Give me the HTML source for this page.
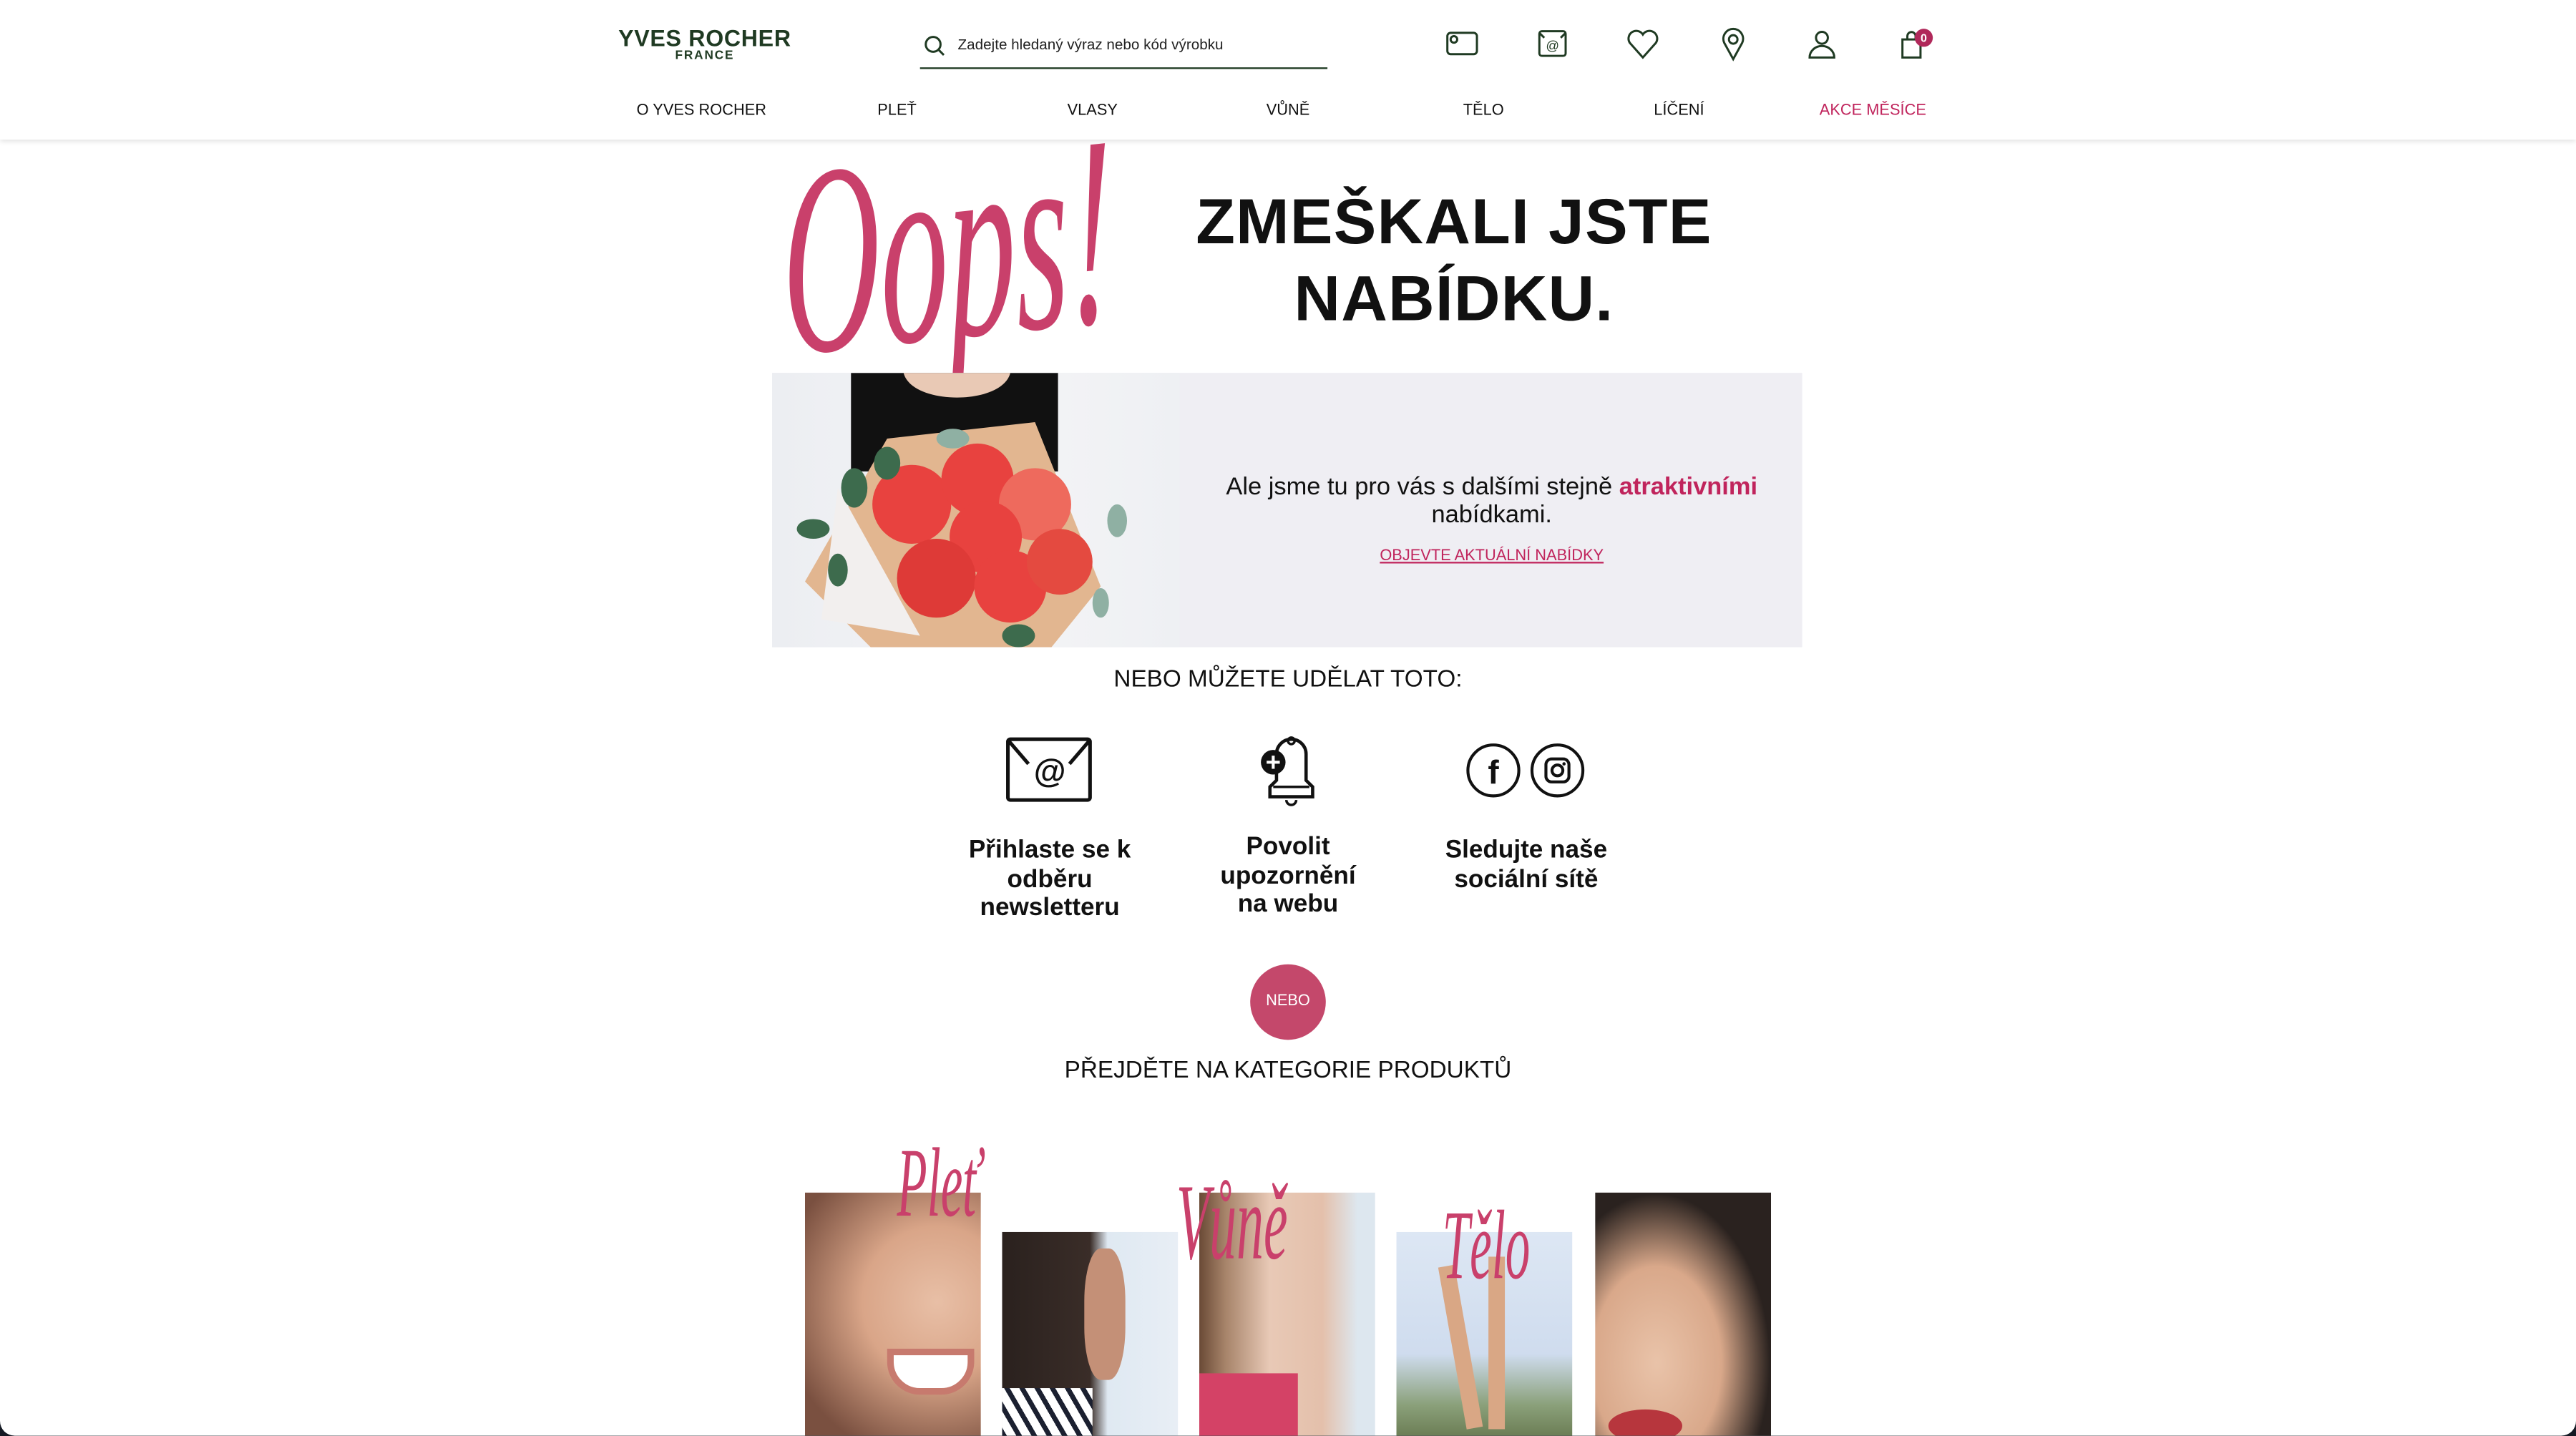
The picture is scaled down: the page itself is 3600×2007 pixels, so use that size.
<!DOCTYPE html>
<html><head><meta charset="utf-8">
<style>
html,body{margin:0;padding:0;background:#151a24;width:3600px;height:2006px;overflow:hidden}
#w{position:absolute;left:0;top:0;width:1568px;height:874px;transform:scale(2.29592);transform-origin:0 0;background:#fff;border-radius:0 0 9px 9px;overflow:hidden;font-family:"Liberation Sans",sans-serif;color:#111}
.a{position:absolute}
.c{position:absolute;transform:translateX(-50%);white-space:nowrap;text-align:center}
.nav{font-size:9.5px;top:62px;color:#111}
.g{stroke:#1f3a22;fill:none;stroke-width:1.3}
.lbl{font-weight:bold;font-size:15.3px;line-height:17.5px}
.ph{position:absolute;overflow:hidden}
.sc{position:absolute;color:#c9406b;font-family:"Liberation Serif",serif;font-style:italic;transform:scaleX(.5);transform-origin:0 0;white-space:nowrap}
</style></head><body><div id="w">
<div class="a" style="left:0;top:0;width:1568px;height:85px;background:#fff;box-shadow:0 1px 3px rgba(0,0,0,.12)"></div>
<div class="c" style="left:429px;top:15px;font-weight:bold;font-size:14px;color:#1f3a22;letter-spacing:.3px">YVES ROCHER</div>
<div class="c" style="left:429px;top:29px;font-weight:bold;font-size:7.5px;color:#1f3a22;letter-spacing:.8px">FRANCE</div>
<svg class="a" style="left:562px;top:21px" width="14" height="14"><circle cx="6" cy="6" r="4.5" class="g" stroke-width="1.5"/><path d="M9.3 9.3L12.5 12.5" class="g" stroke-width="1.5"/></svg>
<div class="a" style="left:583px;top:22px;font-size:9px;color:#222">Zadejte hledaný výraz nebo kód výrobku</div>
<div class="a" style="left:560px;top:41px;width:248px;height:1.3px;background:#1f3a22"></div>
<svg class="a" style="left:879px;top:15px" width="300" height="26">
<rect x="2" y="5" width="18" height="13" rx="2" class="g"/><circle cx="6" cy="9" r="2" class="g" stroke-width="1"/>
<rect x="58" y="4" width="16" height="15" rx="1.5" class="g"/><path d="M58 5l3 3M74 5l-3 3" class="g" stroke-width="1"/><text x="66" y="15.5" font-size="8" text-anchor="middle" fill="#1f3a22" font-family="Liberation Sans">@</text>
<path d="M121 20l-8-9a4.5 4.5 0 0 1 8-5a4.5 4.5 0 0 1 8 5z" class="g"/>
<path d="M176 21l-5.5-10a6 6 0 1 1 11 0z" class="g"/><circle cx="176" cy="9" r="2.6" class="g"/>
<circle cx="230" cy="8" r="3.6" class="g"/><path d="M222.5 20a7.5 7 0 0 1 15 0z" class="g"/>
<path d="M279 9h11v11h-11z" class="g"/><path d="M282 9v-2a2.5 2.5 0 0 1 5 0v2" class="g" stroke-width="1"/>
<circle cx="292" cy="8" r="5.5" fill="#b0285a"/><text x="292" y="10.5" font-size="7" font-weight="bold" text-anchor="middle" fill="#fff" font-family="Liberation Sans">0</text>
</svg>
<div class="c nav" style="left:427px">O YVES ROCHER</div>
<div class="c nav" style="left:546px">PLEŤ</div>
<div class="c nav" style="left:665px">VLASY</div>
<div class="c nav" style="left:784px">VŮNĚ</div>
<div class="c nav" style="left:903px">TĚLO</div>
<div class="c nav" style="left:1022px">LÍČENÍ</div>
<div class="c nav" style="left:1140px;color:#c0245c">AKCE MĚSÍCE</div>

<div class="sc" style="left:474px;top:78px;font-size:165px;line-height:165px;transform:scaleX(.5) rotate(-3deg)">Oops!</div>
<div class="c" style="left:885px;top:112px;font-weight:bold;font-size:39px;line-height:47px;letter-spacing:.5px">ZMEŠKALI JSTE<br>NABÍDKU.</div>

<div class="a" style="left:470px;top:227px;width:627px;height:167px;background:#efeef3"></div>
<div class="ph" style="left:470px;top:227px;width:248px;height:167px;background:linear-gradient(90deg,#eceef2,#f4f4f6 60%,#eef0f3)">
<svg width="248" height="167">
<path d="M48 0h126v60H48z" fill="#111"/><path d="M80 0c5 20 60 20 65 0z" fill="#e9c9b5"/>
<path d="M70 40l90-10 40 100-30 37H60l-40-40z" fill="#e2b690"/>
<path d="M40 70l-10 80 60 10" fill="#f2efee"/>
<g fill="#e8423f"><circle cx="85" cy="80" r="24"/><circle cx="125" cy="65" r="22"/><circle cx="160" cy="80" r="22" fill="#ee6a5d"/><circle cx="130" cy="100" r="22"/><circle cx="100" cy="125" r="24" fill="#de3a37"/><circle cx="145" cy="130" r="22"/><circle cx="175" cy="115" r="20" fill="#e44a40"/></g>
<g fill="#3d6b4d"><ellipse cx="25" cy="95" rx="10" ry="6"/><ellipse cx="50" cy="70" rx="8" ry="12"/><ellipse cx="70" cy="55" rx="8" ry="10"/><ellipse cx="110" cy="40" rx="10" ry="6" fill="#8fb0a3"/><ellipse cx="210" cy="90" rx="6" ry="10" fill="#8fb0a3"/><ellipse cx="200" cy="140" rx="5" ry="9" fill="#8fb0a3"/><ellipse cx="150" cy="160" rx="10" ry="7"/><ellipse cx="40" cy="120" rx="6" ry="10"/></g>
</svg></div>
<div class="c" style="left:908px;top:288px;font-size:15px;line-height:17px">Ale jsme tu pro vás s dalšími stejně <b style="color:#c0245c">atraktivními</b><br>nabídkami.</div>
<div class="c" style="left:908px;top:333px;font-size:9.5px;color:#c0245c;text-decoration:underline">OBJEVTE AKTUÁLNÍ NABÍDKY</div>

<div class="c" style="left:784px;top:406px;font-size:14.5px">NEBO MŮŽETE UDĚLAT TOTO:</div>
<svg class="a" style="left:610px;top:445px" width="400" height="48">
<rect x="3.5" y="5" width="50" height="37" rx="1.5" fill="none" stroke="#111" stroke-width="2.2"/><path d="M4 6l12 14M53 6l-12 14" stroke="#111" stroke-width="2.2"/>
<text x="29" y="31" font-size="20" font-weight="bold" text-anchor="middle" font-family="Liberation Sans" fill="#111">@</text>
<path d="M163 40v-6l4-4v-16a9 9 0 0 1 18 0v16l4 4v6z" fill="none" stroke="#111" stroke-width="2"/><path d="M165 34h22" stroke="#111" stroke-width="1.5"/><circle cx="176" cy="6" r="2" fill="none" stroke="#111" stroke-width="1.5"/><path d="M173 42a3 3 0 0 0 6 0" fill="none" stroke="#111" stroke-width="1.5"/>
<circle cx="165" cy="19" r="7.5" fill="#111"/><path d="M165 15v8M161 19h8" stroke="#fff" stroke-width="1.8"/>
<circle cx="299" cy="24" r="15.5" fill="none" stroke="#111" stroke-width="1.8"/><text x="299" y="32" font-size="20" font-weight="bold" text-anchor="middle" font-family="Liberation Sans" fill="#111">f</text>
<circle cx="338" cy="24" r="15.5" fill="none" stroke="#111" stroke-width="1.8"/><rect x="331" y="17" width="14" height="14" rx="3.5" fill="none" stroke="#111" stroke-width="1.8"/><circle cx="338" cy="24" r="3.3" fill="none" stroke="#111" stroke-width="1.8"/><circle cx="342" cy="20" r="1" fill="#111"/>
</svg>
<div class="c lbl" style="left:639px;top:509px">Přihlaste se k<br>odběru<br>newsletteru</div>
<div class="c lbl" style="left:784px;top:507px">Povolit<br>upozornění<br>na webu</div>
<div class="c lbl" style="left:929px;top:509px">Sledujte naše<br>sociální sítě</div>
<div class="a" style="left:761px;top:587px;width:46px;height:46px;border-radius:50%;background:#c4486b;color:#fff;font-size:9.5px;line-height:46px;text-align:center">NEBO</div>
<div class="c" style="left:784px;top:644px;font-size:14.5px">PŘEJDĚTE NA KATEGORIE PRODUKTŮ</div>

<div class="ph" style="left:490px;top:726px;width:107px;height:148px;background:radial-gradient(ellipse at 75% 45%,#e8bfa6 0,#d9a588 40%,#7a5040 85%)">
<div class="a" style="left:50px;top:95px;width:45px;height:20px;border-radius:0 0 20px 20px;background:#fff;border:4px solid #c77a6e"></div></div>
<div class="ph" style="left:610px;top:750px;width:107px;height:124px;background:linear-gradient(90deg,#2a211e 0,#3a2d28 50%,#dfe9f2 60%,#e8eef5)">
<div class="a" style="left:50px;top:10px;width:25px;height:80px;border-radius:40%;background:#c49077"></div>
<div class="a" style="left:0;top:95px;width:55px;height:40px;background:repeating-linear-gradient(60deg,#fff 0 5px,#1b2030 5px 8px)"></div></div>
<div class="ph" style="left:730px;top:726px;width:107px;height:148px;background:linear-gradient(90deg,#6a4a36 0,#a7846a 15%,#e8c9b6 40%,#e4c0ab 70%,#dde7ef 90%)">
<div class="a" style="left:0;top:110px;width:60px;height:40px;background:#d44266"></div></div>
<div class="ph" style="left:850px;top:750px;width:107px;height:124px;background:linear-gradient(180deg,#dde7f4,#cfdcee 60%,#8aa07a 85%,#6c7e55)">
<div class="a" style="left:34px;top:20px;width:10px;height:100px;background:#d9a785;transform:rotate(-10deg)"></div>
<div class="a" style="left:56px;top:15px;width:10px;height:105px;background:#d9a785"></div></div>
<div class="ph" style="left:971px;top:726px;width:107px;height:148px;background:radial-gradient(ellipse at 35% 70%,#e9c3a9 0,#d9a88a 40%,#2a221f 70%)">
<div class="a" style="left:8px;top:132px;width:45px;height:20px;border-radius:50%;background:#b7363d"></div></div>
<div class="sc" style="left:546px;top:690px;font-size:60px;line-height:60px">Pleť</div>
<div class="sc" style="left:716px;top:712px;font-size:66px;line-height:66px">Vůně</div>
<div class="sc" style="left:878px;top:728px;font-size:60px;line-height:60px">Tělo</div>
</div></body></html>
